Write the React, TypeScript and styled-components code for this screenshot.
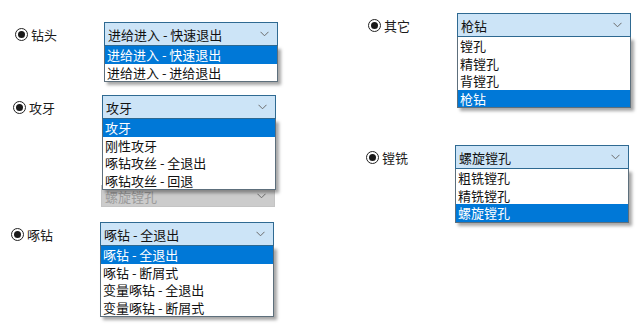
import React from "react";
import styled, { createGlobalStyle } from "styled-components";

const GlobalStyle = createGlobalStyle`
  body {
    margin: 0;
    background: #ffffff;
    font-family: "Noto Sans CJK SC", "Noto Sans", sans-serif;
  }
`;

type FieldTypes = {
  label: string;
  value: string;
  options: string[];
  selected: number;
  shift: number;
  top: number;
};

const leftFields: FieldTypes[] = [
  {
    label: "钻头",
    value: "进给进入 - 快速退出",
    options: ["进给进入 - 快速退出", "进给进入 - 进给退出"],
    selected: 0,
    shift: 15,
    top: 22,
  },
  {
    label: "攻牙",
    value: "攻牙",
    options: ["攻牙", "刚性攻牙", "啄钻攻丝 - 全退出", "啄钻攻丝 - 回退"],
    selected: 0,
    shift: 13,
    top: 49,
  },
];

const peckField: FieldTypes = {
  label: "啄钻",
  value: "啄钻 - 全退出",
  options: ["啄钻 - 全退出", "啄钻 - 断屑式", "变量啄钻 - 全退出", "变量啄钻 - 断屑式"],
  selected: 0,
  shift: 11,
  top: 15,
};

const rightFields: FieldTypes[] = [
  {
    label: "其它",
    value: "枪钻",
    options: ["镗孔", "精镗孔", "背镗孔", "枪钻"],
    selected: 3,
    shift: 12,
    top: 13,
  },
  {
    label: "镗铣",
    value: "螺旋镗孔",
    options: ["粗铣镗孔", "精铣镗孔", "螺旋镗孔"],
    selected: 2,
    shift: 10,
    top: 108,
  },
];

const Chevron = () => (
  <svg width="9" height="6" viewBox="0 0 9 6">
    <path d="M0.5 0.8 L4.5 4.8 L8.5 0.8" fill="none" stroke="#6b6b6b" strokeWidth="1" />
  </svg>
);

// 드롭다운 한 줄
const Field = ({ field }: { field: FieldTypes }) => {
  return (
    <Row shift={field.shift} top={field.top}>
      <RadioLabel>
        <Radio>
          <Dot />
        </Radio>
        {field.label}
      </RadioLabel>
      <ComboWrap>
        <Combo>
          <ComboText>{field.value}</ComboText>
          <Chevron />
        </Combo>
        <DropList>
          {field.options.map((o, i) => (
            <Option key={o} active={i === field.selected}>
              {o}
            </Option>
          ))}
        </DropList>
      </ComboWrap>
    </Row>
  );
};

const App = () => {
  return (
    <>
      <GlobalStyle />
      <Page>
        <Column>
          {leftFields.map((f) => (
            <Field key={f.label} field={f} />
          ))}
          <DisabledCombo>
            <ComboText>螺旋镗孔</ComboText>
            <Chevron />
          </DisabledCombo>
          <Field field={peckField} />
        </Column>
        <Column>
          {rightFields.map((f) => (
            <Field key={f.label} field={f} />
          ))}
        </Column>
      </Page>
    </>
  );
};

export default App;

const Page = styled.div`
  width: 641px;
  height: 329px;
  display: grid;
  grid-template-columns: 356px 285px;
  overflow: hidden;
`;
const Column = styled.div`
  display: flex;
  flex-flow: nowrap column;
`;
const Row = styled.div<{ shift: number; top: number }>`
  display: flex;
  flex-flow: nowrap row;
  align-items: center;
  margin-left: ${({ shift }) => shift}px;
  margin-top: ${({ top }) => top}px;
  position: relative;
  z-index: 2;
`;
const RadioLabel = styled.div`
  width: 89px;
  display: flex;
  align-items: center;
  gap: 3px;
  font-size: 13px;
  color: #1a1a1a;
`;
const Radio = styled.span`
  width: 13px;
  height: 13px;
  border: 1px solid #222;
  border-radius: 50%;
  display: flex;
  align-items: center;
  justify-content: center;
  box-sizing: border-box;
`;
const Dot = styled.span`
  width: 7px;
  height: 7px;
  border-radius: 50%;
  background: #1a1a1a;
`;
const ComboWrap = styled.div`
  position: relative;
  width: 174px;
`;
const Combo = styled.div`
  height: 24px;
  box-sizing: border-box;
  background: #cce4f7;
  border: 1px solid #2f6a92;
  display: flex;
  align-items: center;
  justify-content: space-between;
  padding: 0 8px 0 3px;
  font-size: 13px;
  color: #111;
`;
const ComboText = styled.span`
  line-height: 1;
`;
const DisabledCombo = styled.div`
  margin-top: 66px;
  margin-left: 101px;
  width: 174px;
  height: 22px;
  box-sizing: border-box;
  background: #cccccc;
  border: 1px solid #c4c4c4;
  display: flex;
  align-items: center;
  justify-content: space-between;
  padding: 0 8px 0 3px;
  font-size: 13px;
  color: #9b9b9b;
  position: relative;
  z-index: 1;
`;
const DropList = styled.div`
  position: absolute;
  top: 100%;
  left: 0;
  right: 0;
  background: #ffffff;
  border: 1px solid #5d6f7c;
  border-top: none;
  box-shadow: 3px 3px 3px rgba(0, 0, 0, 0.35);
  display: flex;
  flex-flow: nowrap column;
`;
const Option = styled.div<{ active: boolean }>`
  height: 17.5px;
  display: flex;
  align-items: center;
  padding-left: 2px;
  font-size: 13px;
  background: ${({ active }) => (active ? "#0078d7" : "#ffffff")};
  color: ${({ active }) => (active ? "#ffffff" : "#111111")};
`;
